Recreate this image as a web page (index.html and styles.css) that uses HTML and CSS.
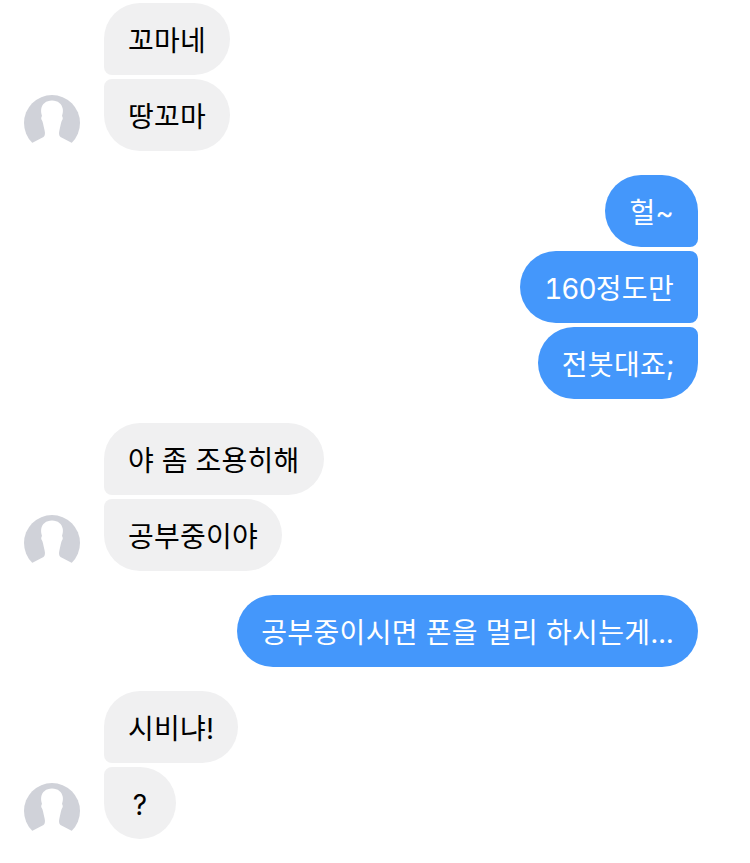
FILE: index.html
```html
<!DOCTYPE html>
<html lang="ko">

<head>
    <meta charset="UTF-8">
    <title>Chat</title>
    <link rel="stylesheet" href="styles.css">
</head>

<body>
    <svg class="defs" width="0" height="0">
        <symbol id="person" viewBox="0 0 56 56">
            <circle cx="28" cy="28" r="28" fill="#d0d2d9" />
            <path fill="#fff"
                d="M28 5.5C22 5.5 18 9 17.2 14C16.8 17 17.5 19 18 21C17 22.5 17 24 17.8 25C19 27 19.5 31 20.5 35C21.2 38 21.3 40.5 19.5 42L7 48.5L0 56H56L49 48.5L36.5 42C34.7 40.5 34.8 38 35.5 35C36.5 31 37 27 38.2 25C39 24 39 22.5 38 21C38.5 19 39.2 17 38.8 14C38 9 34 5.5 28 5.5Z" />
        </symbol>
    </svg>

    <main class="chat">
        <section class="group">
            <svg class="avatar"><use href="#person"></use></svg>
            <div class="stack">
                <p class="bubble">꼬마네</p>
                <p class="bubble">땅꼬마</p>
            </div>
        </section>

        <section class="group mine">
            <div class="stack">
                <p class="bubble">헐~</p>
                <p class="bubble"><span class="num">160</span>정도만</p>
                <p class="bubble">전봇대죠;</p>
            </div>
        </section>

        <section class="group">
            <svg class="avatar"><use href="#person"></use></svg>
            <div class="stack">
                <p class="bubble">야 좀 조용히해</p>
                <p class="bubble">공부중이야</p>
            </div>
        </section>

        <section class="group mine">
            <div class="stack">
                <p class="bubble">공부중이시면 폰을 멀리 하시는게...</p>
            </div>
        </section>

        <section class="group">
            <svg class="avatar"><use href="#person"></use></svg>
            <div class="stack">
                <p class="bubble">시비냐!</p>
                <p class="bubble">?</p>
            </div>
        </section>
    </main>
</body>

</html>
```

FILE: styles.css
```css
body {
    margin: 0;
    background-color: white;
    font-family: Inter, "Noto Sans CJK KR", sans-serif;
}

.defs {
    display: block;
}

.chat {
    display: flex;
    flex-direction: column;
    gap: 24px;
    padding: 3px 52px 24px 24px;
}

.group {
    display: flex;
    align-items: flex-end;
    gap: 24px;
}

.mine {
    justify-content: flex-end;
}

.avatar {
    width: 56px;
    height: 56px;
    flex-shrink: 0;
}

.stack {
    display: flex;
    flex-direction: column;
    align-items: flex-start;
    gap: 4px;
}

.mine .stack {
    align-items: flex-end;
}

.bubble {
    box-sizing: border-box;
    height: 72px;
    min-width: 72px;
    margin: 0;
    padding: 4px 24px 0;
    border-radius: 36px;
    font-size: 28px;
    line-height: 68px;
    letter-spacing: 0.25px;
    font-variant-numeric: tabular-nums;
    text-align: center;
    white-space: nowrap;
    color: black;
    background-color: #f0f0f1;
}

.mine .bubble {
    letter-spacing: 0.35px;
    color: white;
    background-color: #4497fb;
}

.num {
    letter-spacing: -1px;
}

.stack .bubble:not(:last-child) {
    border-bottom-left-radius: 8px;
}

.stack .bubble:not(:first-child) {
    border-top-left-radius: 8px;
}

.mine .stack .bubble {
    border-radius: 36px;
}

.mine .stack .bubble:not(:last-child) {
    border-bottom-right-radius: 8px;
}

.mine .stack .bubble:not(:first-child) {
    border-top-right-radius: 8px;
}
```
